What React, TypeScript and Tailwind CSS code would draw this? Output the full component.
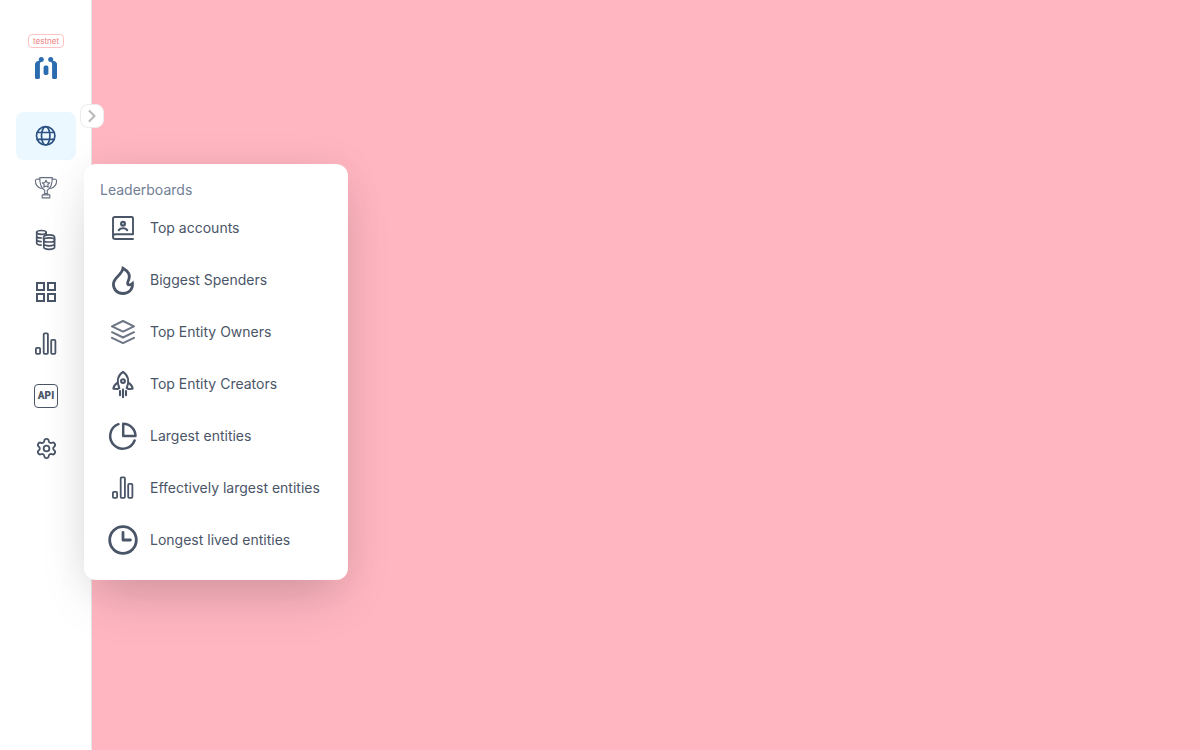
import type { ReactNode } from 'react';
import { ChevronRight, Settings } from 'lucide-react';

function Icon({ children, width = 2 }: { children: ReactNode; width?: number }) {
  return (
    <svg
      viewBox="0 0 30 30"
      className="size-[30px] shrink-0"
      fill="none"
      stroke="currentColor"
      strokeWidth={width}
      strokeLinecap="round"
      strokeLinejoin="round"
      aria-hidden="true"
    >
      {children}
    </svg>
  );
}

const GlobeIcon = () => (
  <Icon width={1.7}>
    <circle cx="14.7" cy="14.8" r="9.2" />
    <ellipse cx="14.7" cy="14.8" rx="4.2" ry="9.2" />
    <path d="M6.3 11.5h16.8M6.3 18.3h16.8" />
  </Icon>
);

const TrophyIcon = () => (
  <span className="opacity-85">
    <Icon width={1.1}>
      <path d="M8.7 4.6h12.6c0 6-.9 10.6-5 12.600v3.300h-2.600v-3.300C9.600 15.200 8.700 10.600 8.700 4.600Z" />
      <path d="M8.800 6.200C6 5.900 4.400 6.300 4.400 7.800c0 4 2.300 6.800 6.200 7.700M21.200 6.200c2.800-.3 4.400.1 4.400 1.600 0 4-2.300 6.800-6.200 7.700" />
      <path d="m15 7.300 1.100 2.300 2.600.3-1.900 1.800.5 2.500-2.300-1.200-2.300 1.200.5-2.500-1.900-1.800 2.600-.3Z" />
      <path d="M11.200 21.900h7.600v3h-7.600ZM13.200 20.500v1.400M16.800 20.500v1.400" />
    </Icon>
  </span>
);

const CoinsIcon = () => (
  <Icon width={1.7}>
    <ellipse cx="10.400" cy="7.400" rx="4.700" ry="1.900" />
    <path d="M5.700 7.400v10.800c0 1 1.800 1.700 4.400 1.900M5.700 11c0 1.200 2 2 4.700 2M5.700 14.600c0 1.200 2 2 4.400 2M15.100 7.400v2" />
    <path d="M12.600 14.300v-1.900c0-1.500 2.400-2.500 5.400-2.500s5.600 1 5.600 2.500v2" />
    <path d="M12.800 14.900c0-1.300 2.400-2.100 5.400-2.100s5.400.8 5.400 2.100-2.400 2.100-5.400 2.100-5.400-.8-5.400-2.100v7.100c0 1.300 2.400 2.300 5.400 2.300s5.400-1 5.400-2.300v-7.100M12.800 18.500c0 1.300 2.400 2.300 5.400 2.300s5.400-1 5.400-2.300" />
  </Icon>
);

const AppsIcon = () => (
  <Icon>
    <path strokeLinejoin="miter" d="M6 6h7v7H6ZM17 6h7v7h-7ZM6 17h7v7H6ZM17 17h7v7h-7Z" />
  </Icon>
);

const BarsIcon = () => (
  <Icon width={1.8}>
    <rect x="4.900" y="18.800" width="4.200" height="6" rx="1" />
    <rect x="12.700" y="4.300" width="4.200" height="20.500" rx="1" />
    <rect x="20.200" y="10.900" width="4.200" height="13.900" rx="1" />
  </Icon>
);

const ApiIcon = () => (
  <span className="flex size-6 items-center justify-center rounded border border-current font-['Roboto',sans-serif] text-[10px] leading-none font-black">
    API
  </span>
);

const AccountsIcon = () => (
  <Icon width={1.9}>
    <path d="M25 21.300V5.200a1.200 1.200 0 0 0-1.200-1.200H6.700A1.700 1.700 0 0 0 5 5.700v18M25 21.300H7.300A2.300 2.300 0 0 0 7.300 26H25" />
    <circle cx="15" cy="10.700" r="1.900" strokeWidth="2.200" />
    <path d="M10.800 17.200c1.800-2.600 6.600-2.600 8.400 0" strokeWidth="2.200" />
  </Icon>
);

const FlameIcon = () => (
  <Icon width={2.8}>
    <path
      strokeLinejoin="miter"
      d="M15 3.200C20.800 6.600 22.400 10.500 20.900 14.300c-.7 1.900-1.600 3-1.300 4.500.4 1.800 2.900 1.400 4.800-.4.600 5.700-3.500 10.100-9.400 10.100-5.700 0-9.600-3.900-9.600-9.300 0-7.200 8.800-9 9.600-16Z"
    />
  </Icon>
);

const LayersIcon = () => (
  <span className="opacity-80">
    <Icon>
      <path d="m15 4 11 5.300-11 5.300L4 9.300ZM4 15.200l11 5.300 11-5.300M4 20.800l11 5.300 11-5.300" />
    </Icon>
  </span>
);

const RocketIcon = () => (
  <Icon width={2.1}>
    <path d="M11.200 19C8.500 12.500 9.700 6.300 15 2.900c5.300 3.400 6.500 9.600 3.800 16.100" />
    <path d="M9.300 13.800c-2.300 1.500-3.700 3.400-3.900 5.900l4.400.3 1.400-1M20.700 13.800c2.300 1.500 3.700 3.400 3.900 5.900l-4.400.3-1.400-1" />
    <circle cx="15" cy="12.100" r="1.900" />
    <path d="M12 22v4.200M15 20.500v7.800M18 22v4.200" />
  </Icon>
);

const PieIcon = () => (
  <Icon width={2.5}>
    <path d="M10.500 3.200A12.600 12.600 0 1 0 26.600 19.500" />
    <path d="M15.200 2.700v12.200h12.300A12.300 12.300 0 0 0 15.200 2.700Z" />
  </Icon>
);

const ClockIcon = () => (
  <Icon width={2.800}>
    <circle cx="15" cy="15" r="13.300" />
    <path d="M15 7.400V15h7.400" />
  </Icon>
);

const boards = [
  { label: 'Top accounts', icon: <AccountsIcon /> },
  { label: 'Biggest Spenders', icon: <FlameIcon /> },
  { label: 'Top Entity Owners', icon: <LayersIcon /> },
  { label: 'Top Entity Creators', icon: <RocketIcon /> },
  { label: 'Largest entities', icon: <PieIcon /> },
  { label: 'Effectively largest entities', icon: <BarsIcon /> },
  { label: 'Longest lived entities', icon: <ClockIcon /> },
];

function LeaderboardsMenu() {
  return (
    <div className="absolute top-0 left-[68px] z-10 min-w-[264px] rounded-xl bg-white p-4 shadow-[0_25px_50px_-12px_rgba(0,0,0,0.17),0_0_40px_rgba(0,0,0,0.06)]">
      <p className="text-sm text-[#718096]">Leaderboards</p>
      <ul className="mt-1 flex flex-col gap-1">
        {boards.map((board) => (
          <li key={board.label}>
            <a href="#" className="flex h-12 items-center gap-3 px-2 text-sm whitespace-nowrap text-[#4a5568]">
              {board.icon}
              {board.label}
            </a>
          </li>
        ))}
      </ul>
    </div>
  );
}

const sections = [
  { label: 'Blockchain', icon: <GlobeIcon />, active: true },
  { label: 'Leaderboards', icon: <TrophyIcon />, menu: <LeaderboardsMenu /> },
  { label: 'Tokens', icon: <CoinsIcon /> },
  { label: 'Apps', icon: <AppsIcon /> },
  { label: 'Charts and stats', icon: <BarsIcon /> },
  { label: 'API', icon: <ApiIcon /> },
  { label: 'Settings', icon: <Settings size={23} strokeWidth={1.9} /> },
];

function Logo() {
  return (
    <svg viewBox="0 0 22 23" className="h-[23px] w-[22px]" fill="#2b6cb0" aria-hidden="true">
      <circle cx="6.300" cy="2.500" r="2.500" />
      <circle cx="15.700" cy="2.500" r="2.500" />
      <path d="M0 6.500 1.500 4.600 4.500 3.500 6 4.500 4.900 6.500V20.500a1.500 1.500 0 0 1-1.500 1.500H1.500A1.500 1.500 0 0 1 0 20.500ZM22 6.500 20.500 4.600 17.500 3.500 16 4.500l1.100 2V20.500a1.500 1.500 0 0 0 1.500 1.500h1.900A1.500 1.500 0 0 0 22 20.500Z" />
      <rect x="8.600" y="8.600" width="4.800" height="9.400" rx="1.800" />
    </svg>
  );
}

export default function App() {
  return (
    <div className="flex min-h-screen bg-[#ffb6c1] font-['Inter',sans-serif]">
      <aside className="relative flex w-[92px] shrink-0 flex-col border-r border-black/10 bg-white px-4 pt-[34px]">
        <a href="#" aria-label="Home" className="flex h-[78px] w-[60px] flex-col items-center gap-[9px]">
          <span className="flex h-3.5 items-center rounded-sm border border-[#fec3c3] px-1 text-[8px] leading-none text-[#ee8080]">
            testnet
          </span>
          <Logo />
        </a>
        <nav>
          <ul className="flex flex-col gap-1">
            {sections.map((section) => (
              <li key={section.label} className="relative">
                <a
                  href="#"
                  aria-label={section.label}
                  className={
                    section.active
                      ? 'flex h-12 w-[60px] items-center justify-center rounded-lg bg-[#ebf8ff] text-[#2c5282]'
                      : 'flex h-12 w-[60px] items-center justify-center rounded-lg text-[#4a5568]'
                  }
                >
                  {section.icon}
                </a>
                {section.menu}
              </li>
            ))}
          </ul>
        </nav>
        <button
          type="button"
          aria-label="Expand sidebar"
          className="absolute top-[104px] -right-[13px] flex size-6 items-center justify-center rounded-lg border border-[#ececec] bg-white text-[#b8b8b8]"
        >
          <ChevronRight size={20} strokeWidth={2.5} className="shrink-0" />
        </button>
      </aside>
      <main className="flex-1" />
    </div>
  );
}
